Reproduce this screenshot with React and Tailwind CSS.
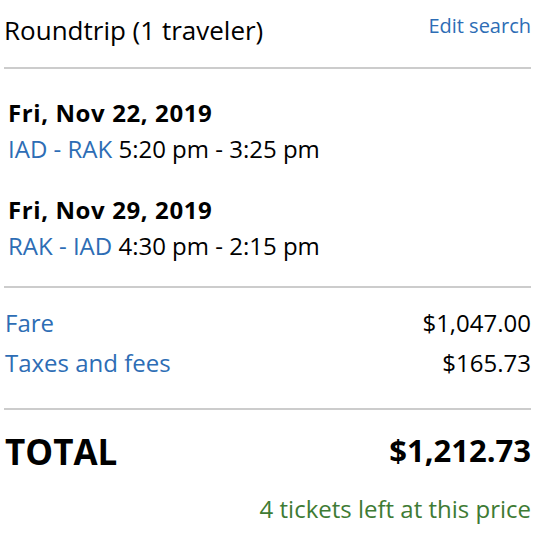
export default function App() {
  const font = { fontFamily: '"Open Sans", "Noto Sans", sans-serif' };
  return (
    <div className="w-[550px] h-[544px] bg-white text-black pl-[4px] pr-[19px]" style={font}>
      <div className="flex justify-between items-start pt-[12px] pb-[19px] border-b-2 border-[#cccccc]">
        <div className="text-[26px] leading-[36px]">Roundtrip (1 traveler)</div>
        <div className="text-[20px] leading-[28px] text-[#2d6db5]">Edit search</div>
      </div>
      <div className="pt-[25px] pb-[23px] pl-[4px] border-b-2 border-[#cccccc]">
        <div className="text-[24px] leading-[38px] font-bold tracking-[0.6px]">Fri, Nov 22, 2019</div>
        <div className="text-[24px] leading-[34px]">
          <span className="text-[#2d6db5]">IAD - RAK</span> 5:20 pm - 3:25 pm
        </div>
        <div className="text-[24px] leading-[38px] font-bold tracking-[0.6px] mt-[25px]">Fri, Nov 29, 2019</div>
        <div className="text-[24px] leading-[34px]">
          <span className="text-[#2d6db5]">RAK - IAD</span> 4:30 pm - 2:15 pm
        </div>
      </div>
      <div className="pt-[15px] pb-[25px] pl-[1px] border-b-2 border-[#cccccc] text-[24px] leading-[40px]">
        <div className="flex justify-between">
          <span className="text-[#2d6db5]">Fare</span>
          <span>$1,047.00</span>
        </div>
        <div className="flex justify-between">
          <span className="text-[#2d6db5]">Taxes and fees</span>
          <span>$165.73</span>
        </div>
      </div>
      <div className="pt-[20px] pl-[1px] flex justify-between items-start font-bold">
        <span className="text-[35px] leading-[44px]">TOTAL</span>
        <span className="text-[31px] leading-[40px]">$1,212.73</span>
      </div>
      <div className="text-right text-[24px] leading-[34px] mt-[18px] text-[#3e7b34]">4 tickets left at this price</div>
    </div>
  );
}
